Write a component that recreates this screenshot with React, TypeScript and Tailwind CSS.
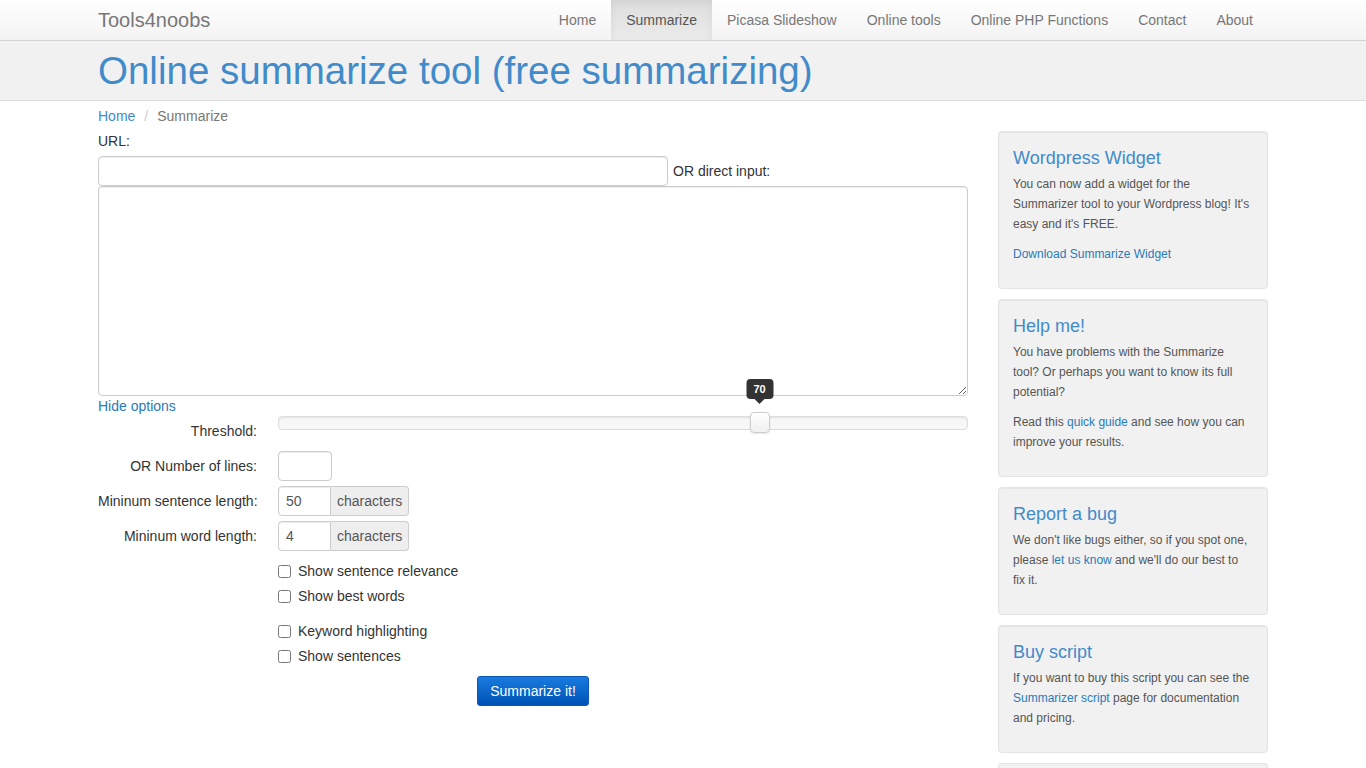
import React, { useState } from "react";

const navItems = [
  "Home",
  "Summarize",
  "Picasa Slideshow",
  "Online tools",
  "Online PHP Functions",
  "Contact",
  "About",
];

/**
 * Top navigation bar with brand and right-aligned menu
 */
function NavBar() {
  return (
    <div className="h-[41px] border-b border-[#d4d4d4] bg-gradient-to-b from-white to-[#f3f3f3] shadow-[0_1px_5px_rgba(0,0,0,0.06)]">
      <div className="mx-auto flex h-[40px] w-[1200px] items-center justify-between px-[15px]">
        <span className="text-[20px] text-[#777]">Tools4noobs</span>
        <ul className="flex h-[40px]">
          {navItems.map((item) => (
            <li
              key={item}
              className={
                item === "Summarize"
                  ? "flex h-[40px] items-center bg-gradient-to-b from-[#dedede] to-[#ebebeb] px-[15px] text-[14px] text-[#555] shadow-[inset_0_3px_9px_rgba(0,0,0,0.06)]"
                  : "flex h-[40px] items-center px-[15px] text-[14px] text-[#777]"
              }
            >
              {item}
            </li>
          ))}
        </ul>
      </div>
    </div>
  );
}

/**
 * Sidebar box (bootstrap "well" look)
 */
function Well({ title, children }: { title: string; children?: React.ReactNode }) {
  return (
    <div className="mb-[10px] rounded-[4px] border border-[#e3e3e3] bg-[#f1f1f1] px-[14px] pb-[14px] pt-[16px] shadow-[inset_0_1px_1px_rgba(0,0,0,0.05)]">
      <h3 className="mb-[6px] text-[18px] leading-[20px] text-[#428bca]">{title}</h3>
      {children}
    </div>
  );
}

function SideText({ children }: { children: React.ReactNode }) {
  return <p className="mb-[10px] text-[12px] leading-[20px] text-[#555]">{children}</p>;
}

function SideLink({ children }: { children: React.ReactNode }) {
  return <a className="text-[#2a7ab9]">{children}</a>;
}

/**
 * Labelled row of the options form
 */
function OptionRow({ label, children }: { label: string; children: React.ReactNode }) {
  return (
    <div className="mb-[5px] flex h-[30px]">
      <label className="w-[180px] shrink-0 whitespace-nowrap pr-[21px] text-right leading-[30px]">{label}</label>
      <div className="flex-1">{children}</div>
    </div>
  );
}

function CharsInput({ value }: { value: string }) {
  return (
    <div className="flex h-[30px]">
      <input
        defaultValue={value}
        className="h-[30px] w-[53px] rounded-l-[4px] border border-[#ccc] px-[7px] text-[14px] text-[#555] outline-none shadow-[inset_0_1px_1px_rgba(0,0,0,0.075)]"
      />
      <span className="flex h-[30px] items-center rounded-r-[4px] border border-l-0 border-[#ccc] bg-[#eee] px-[6px] text-[14px] text-[#555]">
        characters
      </span>
    </div>
  );
}

function Check({ label, className = "" }: { label: string; className?: string }) {
  return (
    <label className={"flex h-[20px] items-center " + className}>
      <input type="checkbox" className="m-0 mr-[7px] h-[13px] w-[13px]" />
      {label}
    </label>
  );
}

/**
 * Threshold slider with value tooltip above the handle
 */
function Threshold() {
  const [value] = useState(70);
  return (
    <div className="relative h-[14px] rounded-[4px] border border-[#ddd] bg-gradient-to-b from-[#f5f5f5] to-[#f9f9f9] shadow-[inset_0_1px_2px_rgba(0,0,0,0.08)]">
      <div className="absolute top-[-5px] -ml-[11px]" style={{ left: `${value}%` }}>
        <div className="absolute bottom-[29px] left-1/2 -translate-x-1/2">
          <div className="flex h-[20px] w-[27px] items-center justify-center rounded-[4px] bg-[#333] text-[11px] font-bold text-white">
            {value}
          </div>
          <div className="mx-auto h-0 w-0 border-x-[5px] border-t-[5px] border-x-transparent border-t-[#333]" />
        </div>
        <div className="h-[21px] w-[20px] rounded-[4px] border border-[#ccc] bg-gradient-to-b from-white to-[#f0f0f0] shadow-[0_1px_2px_rgba(0,0,0,0.1)]" />
      </div>
    </div>
  );
}

export default function App() {
  return (
    <div className="min-h-[768px] bg-white font-['Liberation_Sans',Arial,sans-serif] text-[14px] text-[#333]">
      <NavBar />
      {/* Page heading band */}
      <div className="border-b border-[#ddd] bg-[#f1f1f1]">
        <div className="mx-auto flex h-[59px] w-[1200px] items-center px-[15px]">
          <h1 className="text-[38.5px] leading-[40px] text-[#428bca]">Online summarize tool (free summarizing)</h1>
        </div>
      </div>

      <div className="mx-auto flex w-[1200px]">
        {/* Main column */}
        <div className="w-[900px] px-[15px]">
          <div className="h-[30px] pt-[5px] leading-[20px]">
            <a className="text-[#428bca]">Home</a>
            <span className="px-[9px] text-[#ccc]">/</span>
            <span className="text-[#777]">Summarize</span>
          </div>
          <div className="leading-[20px]">URL:</div>
          <div className="mt-[5px] flex items-center">
            <input className="h-[30px] w-[570px] rounded-[4px] border border-[#ccc] px-[12px] outline-none shadow-[inset_0_1px_1px_rgba(0,0,0,0.075)]" />
            <span className="ml-[5px]">OR direct input:</span>
          </div>
          <textarea className="block h-[210px] w-full rounded-[4px] border border-[#ccc] p-[6px] outline-none shadow-[inset_0_1px_1px_rgba(0,0,0,0.075)]" />
          <a className="block leading-[20px] text-[#2a7ab9]">Hide options</a>

          <OptionRow label="Threshold:">
            <Threshold />
          </OptionRow>
          <OptionRow label="OR Number of lines:">
            <input className="h-[30px] w-[54px] rounded-[4px] border border-[#ccc] outline-none shadow-[inset_0_1px_1px_rgba(0,0,0,0.075)]" />
          </OptionRow>
          <OptionRow label="Mininum sentence length:">
            <CharsInput value="50" />
          </OptionRow>
          <OptionRow label="Mininum word length:">
            <CharsInput value="4" />
          </OptionRow>

          <div className="ml-[180px] mt-[10px] flex flex-col">
            <Check label="Show sentence relevance" />
            <Check label="Show best words" className="mt-[5px]" />
            <Check label="Keyword highlighting" className="mt-[15px]" />
            <Check label="Show sentences" className="mt-[5px]" />
          </div>

          <div className="mt-[10px] flex justify-center">
            <button className="h-[30px] w-[112px] rounded-[3px] border border-[#0a58b0] bg-gradient-to-b from-[#1a7be0] to-[#0052b5] text-[14px] text-white">
              Summarize it!
            </button>
          </div>
        </div>

        {/* Sidebar */}
        <div className="w-[300px] px-[15px] pt-[30px]">
          <Well title="Wordpress Widget">
            <SideText>
              You can now add a widget for the Summarizer tool to your Wordpress blog! It's easy and it's FREE.
            </SideText>
            <SideText>
              <SideLink>Download Summarize Widget</SideLink>
            </SideText>
          </Well>
          <Well title="Help me!">
            <SideText>
              You have problems with the Summarize tool? Or perhaps you want to know its full potential?
            </SideText>
            <SideText>
              Read this <SideLink>quick guide</SideLink> and see how you can improve your results.
            </SideText>
          </Well>
          <Well title="Report a bug">
            <SideText>
              We don't like bugs either, so if you spot one, please <SideLink>let us know</SideLink> and we'll do
              our best to fix it.
            </SideText>
          </Well>
          <Well title="Buy script">
            <SideText>
              If you want to buy this script you can see the <SideLink>Summarizer script</SideLink> page for
              documentation and pricing.
            </SideText>
          </Well>
          <div className="h-[40px] rounded-t-[4px] border border-b-0 border-[#e3e3e3] bg-[#f1f1f1]" />
        </div>
      </div>
    </div>
  );
}
